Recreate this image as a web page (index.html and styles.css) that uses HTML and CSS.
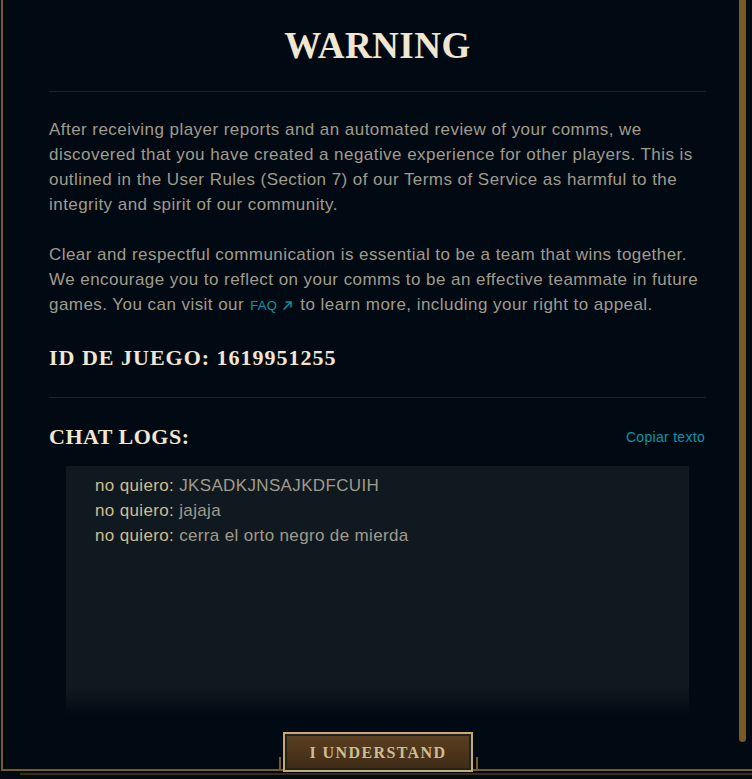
FILE: index.html
```html
<!DOCTYPE html>
<html lang="en">
<head>
    <meta charset="UTF-8">
    <meta name="viewport" content="width=device-width, initial-scale=1.0">
    <title>Warning</title>
    <link rel="stylesheet" href="styles.css">
</head>
<body>
    <div class="frame">
        <div class="content">
            <h1 class="title">WARNING</h1>
            <hr class="divider">
            <p class="text">After receiving player reports and an automated review of your comms, we discovered that you have created a negative experience for other players. This is outlined in the User Rules (Section 7) of our Terms of Service as harmful to the integrity and spirit of our community.</p>
            <p class="text">Clear and respectful communication is essential to be a team that wins together. We encourage you to reflect on your comms to be an effective teammate in future games. You can visit our <a class="faq" href="#">FAQ<svg class="arrow" width="11" height="11" viewBox="0 0 11 11"><path d="M1.5 9.5 L9 2 M3.5 2 H9 V7.5" fill="none" stroke="currentColor" stroke-width="1.5"/></svg></a> to learn more, including your right to appeal.</p>
            <h2 class="heading game-id">ID DE JUEGO: 1619951255</h2>
            <hr class="divider">
            <div class="logs-head">
                <h2 class="heading">CHAT LOGS:</h2>
                <a class="copy" href="#">Copiar texto</a>
            </div>
            <div class="logs">
                <div class="line"><span class="name">no quiero:</span> JKSADKJNSAJKDFCUIH</div>
                <div class="line"><span class="name">no quiero:</span> jajaja</div>
                <div class="line"><span class="name">no quiero:</span> cerra el orto negro de mierda</div>
            </div>
        </div>
        <div class="footer">
            <button class="btn">I UNDERSTAND</button>
        </div>
        <div class="scroll-thumb"></div>
    </div>
    <div class="shadow-line"></div>
</body>
</html>
```

FILE: styles.css
```css
body {
    margin: 0;
    background-color: #010a13;
    font-family: "Liberation Sans", Arial, sans-serif;
    overflow: hidden;
}
.frame {
    position: relative;
    box-sizing: border-box;
    height: 771px;
    margin-left: 1px;
    border-left: 2px solid #785a28;
    border-bottom: 2px solid #785a28;
}
.content {
    padding: 0 46px 0 46px;
    width: 657px;
}
.title {
    margin: 0;
    padding-top: 24px;
    font-family: "Liberation Serif", serif;
    font-size: 37px;
    line-height: 44px;
    font-weight: bold;
    letter-spacing: 0.5px;
    text-align: center;
    color: #f0e6d2;
}
.divider {
    margin: 23px 0 0 0;
    border: none;
    height: 1px;
    background-color: #1e2328;
}
.text {
    margin: 25px 0 0 0;
    font-size: 17px;
    line-height: 25px;
    letter-spacing: 0.45px;
    color: #a09b8c;
}
.faq {
    color: #0397ab;
    text-decoration: none;
    font-size: 13px;
    letter-spacing: 0.3px;
    padding-left: 1px;
    margin-right: 2px;
}
.arrow {
    vertical-align: -1px;
    margin-left: 5px;
}
.heading {
    margin: 0;
    font-family: "Liberation Serif", serif;
    font-size: 22px;
    line-height: 30px;
    font-weight: bold;
    letter-spacing: 1px;
    color: #f0e6d2;
}
.game-id {
    margin-top: 25px;
}
.game-id + .divider {
    margin-top: 24px;
}
.logs-head {
    display: flex;
    justify-content: space-between;
    align-items: center;
    margin-top: 24px;
}
.logs-head .heading {
    letter-spacing: 0.5px;
}
.copy {
    color: #0397ab;
    text-decoration: none;
    font-size: 14px;
    line-height: 20px;
    letter-spacing: 0.3px;
    margin-right: 1px;
}
.logs {
    margin: 14px 17px 0 17px;
    height: 249px;
    box-sizing: border-box;
    padding: 7px 29px;
    background: linear-gradient(#111920 0, #111920 222px, #010a13 249px);
}
.line {
    font-size: 17px;
    line-height: 25px;
    letter-spacing: 0.35px;
    color: #a09b8c;
}
.name {
    color: #cdbe91;
}
.footer {
    position: relative;
    display: flex;
    justify-content: center;
    width: 749px;
    margin-top: 17px;
}
.footer::before,
.footer::after {
    content: "";
    position: absolute;
    top: 25px;
    width: 2px;
    height: 14px;
    background-color: #785a28;
}
.footer::before {
    left: 276px;
}
.footer::after {
    left: 473px;
}
.btn {
    position: relative;
    z-index: 1;
    box-sizing: border-box;
    width: 190px;
    height: 40px;
    margin-left: 1px;
    border: 2px solid #c8aa6e;
    box-shadow: inset 0 0 0 2px #1e2328;
    background: linear-gradient(#5c4020, #3e2a16);
    font-family: "Liberation Serif", serif;
    font-size: 16px;
    font-weight: bold;
    letter-spacing: 1.4px;
    color: #cdbe91;
    padding: 2px 0 0 0;
    cursor: pointer;
}
.scroll-thumb {
    position: absolute;
    top: 0;
    left: 736px;
    width: 7px;
    height: 742px;
    border-radius: 0 0 4px 4px;
    background-color: #785a28;
}
.shadow-line {
    height: 2px;
    margin: 2px 0 0 20px;
    background-color: #3b2d14;
}
```
